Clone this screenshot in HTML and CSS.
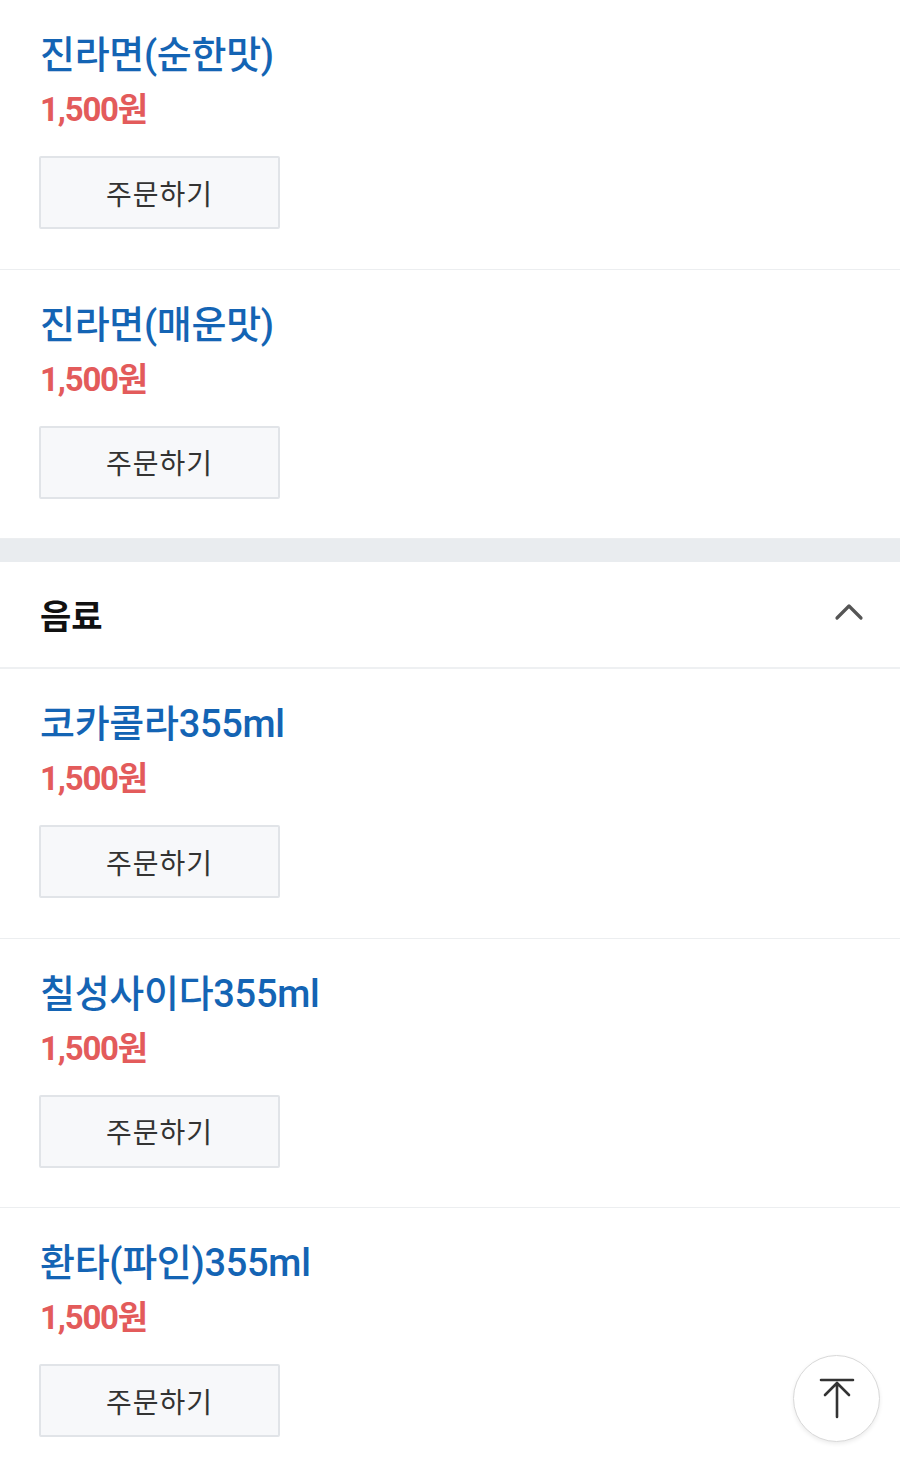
FILE: index.html
```html
<!DOCTYPE html>
<html lang="ko">
<head>
<meta charset="utf-8">
<link rel="stylesheet" href="styles.css">
</head>
<body>
<div class="page">
  <div class="item">
    <div class="title">진라면(순한맛)</div>
    <div class="price">1,500원</div>
    <button class="order">주문하기</button>
  </div>
  <div class="item">
    <div class="title">진라면(매운맛)</div>
    <div class="price">1,500원</div>
    <button class="order">주문하기</button>
  </div>
  <div class="band"></div>
  <div class="section-head">
    <span class="section-title">음료</span>
    <svg class="chev" width="30" height="20" viewBox="0 0 30 20"><path d="M3 16 L15 4 L27 16" fill="none" stroke="#555" stroke-width="3.2" stroke-linecap="round" stroke-linejoin="round"/></svg>
  </div>
  <div class="item">
    <div class="title">코카콜라355ml</div>
    <div class="price">1,500원</div>
    <button class="order">주문하기</button>
  </div>
  <div class="item">
    <div class="title">칠성사이다355ml</div>
    <div class="price">1,500원</div>
    <button class="order">주문하기</button>
  </div>
  <div class="item">
    <div class="title">환타(파인)355ml</div>
    <div class="price">1,500원</div>
    <button class="order">주문하기</button>
  </div>
</div>
<button class="top-btn" aria-label="맨 위로">
  <svg width="40" height="44" viewBox="0 0 40 44"><path d="M4 3 H36 M20 6 V40 M8 18 L20 6 L32 18" fill="none" stroke="#333" stroke-width="2.6" stroke-linecap="round" stroke-linejoin="round"/></svg>
</button>
</body>
</html>
```

FILE: styles.css
```css
html, body {
  margin: 0;
  padding: 0;
  background: #fff;
}
body {
  font-family: Roboto, "Noto Sans CJK KR", sans-serif;
  color: #222;
}
.page {
  display: flex;
  flex-direction: column;
}
.item {
  padding: 32px 40px 39.5px 40px;
  border-bottom: 1px solid #eceef0;
  display: flex;
  flex-direction: column;
  align-items: flex-start;
}
.title {
  font-size: 38px;
  line-height: 46px;
  font-weight: 500;
  color: #1464b4;
  letter-spacing: -0.3px;
}
.price {
  margin-top: 12px;
  font-size: 33px;
  line-height: 40px;
  font-weight: 700;
  color: #e35b5b;
  letter-spacing: -1.2px;
}
.order {
  margin-top: 26px;
  width: 241px;
  height: 73px;
  margin-left: -1px;
  background: #f7f8fa;
  border: 2px solid #e1e4e8;
  border-radius: 2px;
  font-family: "Noto Sans CJK KR", sans-serif;
  font-size: 28px;
  color: #333;
  padding: 0;
  letter-spacing: 1px;
}
.band {
  height: 23px;
  background: #e9ecef;
}
.section-head {
  height: 105px;
  border-bottom: 2px solid #eef0f2;
  display: flex;
  align-items: center;
  justify-content: space-between;
  padding: 0 36px 0 40px;
}
.section-title {
  font-family: "Noto Sans CJK KR", sans-serif;
  font-size: 34px;
  font-weight: 700;
  color: #111;
}
.chev {
  margin-top: -6px;
}
.top-btn {
  position: fixed;
  left: 793px;
  top: 1355px;
  width: 87px;
  height: 87px;
  border-radius: 50%;
  background: #fff;
  border: 1.5px solid #d8d8d8;
  box-shadow: 0 2px 4px rgba(0,0,0,0.08);
  display: flex;
  align-items: center;
  justify-content: center;
  padding: 0;
}
```
